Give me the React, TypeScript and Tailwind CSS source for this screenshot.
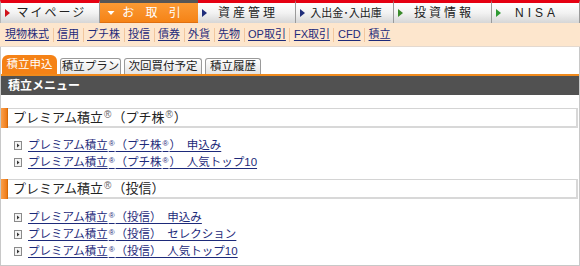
import React from "react";

const navTabs = [
  { label: "マイページ", w: "w-[100px]", tri: "#d0121b", track: "tracking-[2px]", size: "text-[12px]" },
  { label: "お 取 引", w: "w-[98px]", active: true },
  { label: "資産管理", w: "w-[98px]", tri: "#1f2d7a", track: "tracking-[3px]", size: "text-[12px]" },
  { label: "入出金･入出庫", w: "w-[98px]", tri: "#1f2d7a", track: "tracking-[0px]", size: "text-[11px]" },
  { label: "投資情報", w: "w-[98px]", tri: "#3a8a2a", track: "tracking-[3px]", size: "text-[12px]" },
  { label: "NISA", w: "flex-1", tri: "#2e9a33", track: "tracking-[4px]", size: "text-[12px]" },
];

const subLinks = ["現物株式", "信用", "プチ株", "投信", "債券", "外貨", "先物", "OP取引", "FX取引", "CFD", "積立"];

const R = () => <span className="text-[8px] relative top-[-3px] mx-[1px]">®</span>;
const RH = () => <span className="text-[10px] relative top-[-3px] mx-[1px] text-[#666]">®</span>;

function LinkIcon() {
  return (
    <svg width="8" height="9" viewBox="0 0 8 9" className="shrink-0">
      <rect x="0.5" y="0.5" width="7" height="8" fill="#f4f4f4" stroke="#8a8a8a" />
      <path d="M3 2.5 L5.5 4.5 L3 6.5 Z" fill="#333" />
    </svg>
  );
}

function SectionHeader({ children }: { children: React.ReactNode }) {
  return (
    <div className="flex h-[20px] mr-[1px]">
      <div className="w-[7px] bg-gradient-to-r from-[#f9a04a] to-[#ee7a10] border-r border-[#d66a08]" />
      <div className="flex-1 flex items-center pl-[5px] text-[13px] text-[#222] whitespace-nowrap border-t border-[#d4d4d4] border-b-2 border-b-[#d8d8d8] border-r-2 border-r-[#d8d8d8] bg-white">
        {children}
      </div>
    </div>
  );
}

function MenuLink({ children }: { children: React.ReactNode }) {
  return (
    <div className="flex items-center h-[17px] pl-[13px] gap-[6px]">
      <LinkIcon />
      <a className="text-[11.5px] text-[#1d2a7a] underline underline-offset-[2px] leading-none whitespace-nowrap">{children}</a>
    </div>
  );
}

const subTab =
  "h-[16px] px-[5px] rounded-t-[3px] border border-b-0 border-[#9a9a9a] bg-gradient-to-b from-white to-[#e4e4e4] text-[#222] text-[11.5px] flex items-center justify-center whitespace-nowrap";

export default function App() {
  return (
    <div
      className="w-[580px] h-[266px] bg-white flex flex-col overflow-hidden"
      style={{ fontFamily: '"Liberation Sans", "Noto Sans CJK JP", sans-serif' }}
    >
      {/* Top nav */}
      <div className="flex h-[23px]">
        {navTabs.map((t, i) =>
          t.active ? (
            <div
              key={i}
              className={`${t.w} flex items-center border-t-[3px] border-[#555] bg-gradient-to-b from-[#fb9a33] to-[#f58315] border-b border-b-[#e07010]`}
            >
              <svg width="8" height="6" viewBox="0 0 8 6" className="ml-[7px] shrink-0">
                <path d="M0.5 1 L7.5 1 L4 5 Z" fill="#fff" />
              </svg>
              <span className="flex-1 text-center text-white text-[12px] tracking-[4px] pr-[6px] whitespace-nowrap">{t.label}</span>
            </div>
          ) : (
            <div
              key={i}
              className={`${t.w} flex items-center border-t-[3px] border-t-[#e50012] bg-gradient-to-b from-[#ffffff] via-[#f2f2f2] to-[#d6d6d6] border-r border-r-[#9a9a9a] ${i === 0 ? "border-l border-l-[#b5b5b5]" : ""}`}
            >
              <svg width="5" height="8" viewBox="0 0 5 8" className="ml-[4px] shrink-0">
                <path d="M0 0 L5 4 L0 8 Z" fill={t.tri} />
              </svg>
              <span className={`flex-1 text-center text-[#222] ${t.size} ${t.track} pr-[6px] whitespace-nowrap`}>{t.label}</span>
            </div>
          )
        )}
      </div>

      {/* Sub nav */}
      <div className="h-[24px] bg-[#fde6cd] border-b border-[#e4d9cf] flex items-center pl-[5px]">
        {subLinks.map((s, i) => (
          <React.Fragment key={s}>
            {i > 0 && <span className="w-px h-[14px] bg-[#f2c79e] mx-[3.5px]" />}
            <a className="text-[11px] text-[#1d2a7a] underline underline-offset-[2px] leading-none whitespace-nowrap">{s}</a>
          </React.Fragment>
        ))}
      </div>

      {/* Body */}
      <div className="flex-1 border-x border-b border-[#c8c8c8] flex flex-col">
        {/* Sub tabs */}
        <div className="flex items-end h-[27px] pl-[1px] gap-[3px]">
          <div className="h-[19px] w-[55px] rounded-t-[6px] bg-[#f58216] text-white text-[11.5px] flex items-center justify-center whitespace-nowrap">
            積立申込
          </div>
          <div className={`${subTab} w-[61px]`}>積立プラン</div>
          <div className={`${subTab} w-[78px]`}>次回買付予定</div>
          <div className={`${subTab} w-[56px]`}>積立履歴</div>
        </div>
        <div className="h-[2px] bg-[#f08a1c]" />
        <div className="h-[19px] bg-[#515151] flex items-center pl-[7px] text-white text-[12px] font-bold">
          積立メニュー
        </div>

        <div className="mt-[13px]">
          <SectionHeader>
            プレミアム積立<RH />（プチ株<RH />）
          </SectionHeader>
          <div className="mt-[9px] mb-[8px]">
            <MenuLink>プレミアム積立<R />（プチ株<R />）　申込み</MenuLink>
            <MenuLink>プレミアム積立<R />（プチ株<R />）　人気トップ10</MenuLink>
          </div>
          <SectionHeader>
            プレミアム積立<RH />（投信）
          </SectionHeader>
          <div className="mt-[10px]">
            <MenuLink>プレミアム積立<R />（投信）　申込み</MenuLink>
            <MenuLink>プレミアム積立<R />（投信）　セレクション</MenuLink>
            <MenuLink>プレミアム積立<R />（投信）　人気トップ10</MenuLink>
          </div>
        </div>
      </div>
    </div>
  );
}
